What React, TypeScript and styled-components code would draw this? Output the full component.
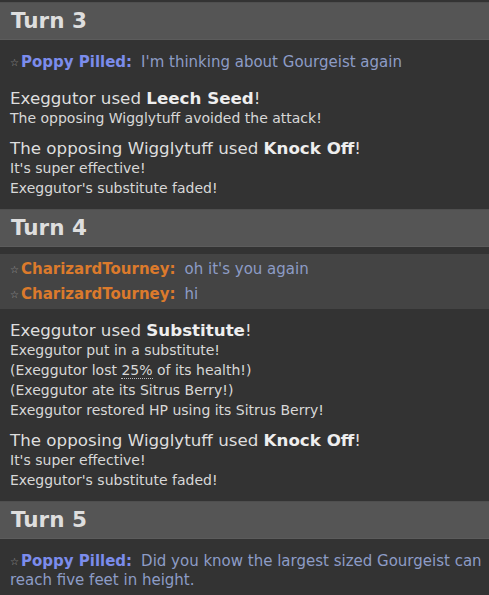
import React from 'react';
import styled, { createGlobalStyle } from 'styled-components';

const GlobalStyle = createGlobalStyle`
  html, body {
    margin: 0;
    padding: 0;
    background: #333333;
  }
  body {
    font-family: 'DejaVu Sans', Verdana, sans-serif;
    color: #dddddd;
  }
`;

// Layout
const Log = styled.div`
  width: 489px;
  height: 595px;
  overflow: hidden;
  background: #333333;
  padding-top: 2px;
  box-sizing: border-box;
`;

const TurnHeader = styled.h2`
  margin: 0 0 7px;
  height: 38px;
  box-sizing: border-box;
  padding: 0 11px;
  display: flex;
  align-items: center;
  background: #555555;
  border-top: 1px solid #4f4f4f;
  border-bottom: 1px solid #5c5c5c;
  color: #dedede;
  font-size: 21.5px;
  font-weight: bold;
  line-height: 1;
`;

const ChatGroup = styled.div<{ $highlight?: boolean }>`
  padding: 2.5px 0;
  background: ${(p) => (p.$highlight ? '#444444' : 'transparent')};
`;

const ChatLine = styled.div`
  padding: 3px 4px 3px 10px;
  line-height: 18px;
`;

const Star = styled.span`
  color: #9a9a9a;
  font-size: 10px;
  margin-right: 2px;
  vertical-align: 1px;
`;

const Name = styled.strong<{ $color: string }>`
  color: ${(p) => p.$color};
  font-size: 15px;
  font-weight: bold;
`;

const Message = styled.em`
  font-style: normal;
  color: #8d9cc6;
  font-size: 15px;
  margin-left: 9px;
`;

const Battle = styled.div`
  padding: 11px 10px 1px;
`;

const Entry = styled.div`
  margin-bottom: 10px;
`;

const Main = styled.div`
  font-size: 16.7px;
  line-height: 20px;
  color: #dedede;

  strong {
    color: #eeeeee;
  }
`;

const Small = styled.div`
  font-size: 14px;
  line-height: 20px;
  color: #d8d8d8;
`;

const Percent = styled.abbr`
  text-decoration: none;
  border-bottom: 1px dotted #bbbbbb;
`;

const POPPY = '#7b8cec';
const CHARIZARD = '#db7a2c';

type ChatProps = { name: string; color: string; children: React.ReactNode };

const Chat = ({ name, color, children }: ChatProps) => (
  <ChatLine>
    <Star>☆</Star>
    <Name $color={color}>{name}:</Name>
    <Message>{children}</Message>
  </ChatLine>
);

const KnockOff = () => (
  <Entry>
    <Main>
      The opposing Wigglytuff used <strong>Knock Off</strong>!
    </Main>
    <Small>It's super effective!</Small>
    <Small>Exeggutor's substitute faded!</Small>
  </Entry>
);

export default function App() {
  return (
    <>
      <GlobalStyle />
      <Log>
        <TurnHeader>Turn 3</TurnHeader>
        <ChatGroup>
          <Chat name="Poppy Pilled" color={POPPY}>
            I'm thinking about Gourgeist again
          </Chat>
        </ChatGroup>
        <Battle>
          <Entry>
            <Main>
              Exeggutor used <strong>Leech Seed</strong>!
            </Main>
            <Small>The opposing Wigglytuff avoided the attack!</Small>
          </Entry>
          <KnockOff />
        </Battle>

        <TurnHeader>Turn 4</TurnHeader>
        <ChatGroup $highlight>
          <Chat name="CharizardTourney" color={CHARIZARD}>
            oh it's you again
          </Chat>
          <Chat name="CharizardTourney" color={CHARIZARD}>
            hi
          </Chat>
        </ChatGroup>
        <Battle>
          <Entry>
            <Main>
              Exeggutor used <strong>Substitute</strong>!
            </Main>
            <Small>Exeggutor put in a substitute!</Small>
            <Small>
              (Exeggutor lost <Percent title="25%">25%</Percent> of its health!)
            </Small>
            <Small>(Exeggutor ate its Sitrus Berry!)</Small>
            <Small>Exeggutor restored HP using its Sitrus Berry!</Small>
          </Entry>
          <KnockOff />
        </Battle>

        <TurnHeader>Turn 5</TurnHeader>
        <ChatGroup>
          <Chat name="Poppy Pilled" color={POPPY}>
            Did you know the largest sized Gourgeist can reach five feet in height.
          </Chat>
        </ChatGroup>
      </Log>
    </>
  );
}
